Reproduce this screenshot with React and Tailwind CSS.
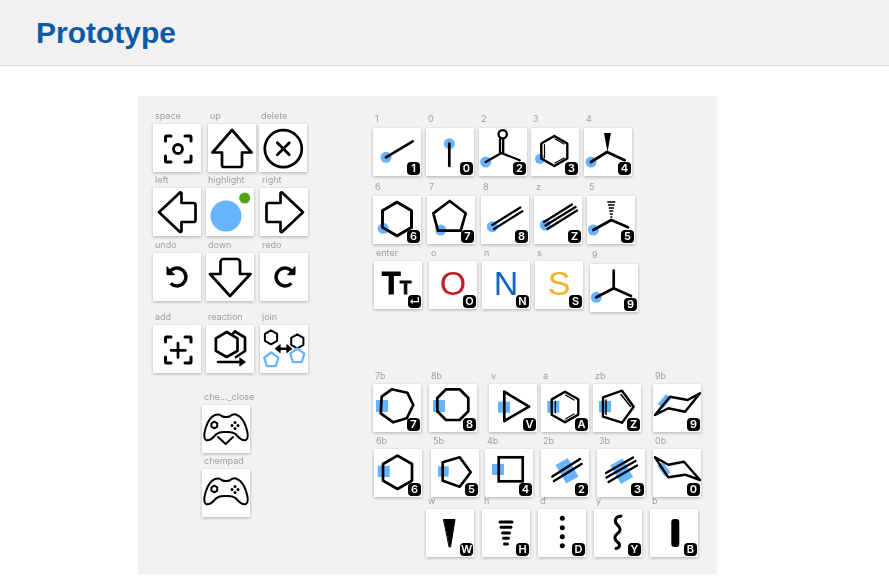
const BLUE = '#66b3ff';

function hexPts(cx, cy, r) {
  const pts = [];
  for (let i = 0; i < 6; i++) {
    const a = (Math.PI / 3) * i - Math.PI / 2;
    pts.push(`${(cx + r * Math.cos(a)).toFixed(1)},${(cy + r * Math.sin(a)).toFixed(1)}`);
  }
  return pts.join(' ');
}

function pentPts(cx, cy, r) {
  const pts = [];
  for (let i = 0; i < 5; i++) {
    const a = ((Math.PI * 2) / 5) * i - Math.PI / 2;
    pts.push(`${(cx + r * Math.cos(a)).toFixed(1)},${(cy + r * Math.sin(a)).toFixed(1)}`);
  }
  return pts.join(' ');
}

const Svg = ({ children }) => (
  <svg viewBox="0 0 48 48" className="w-full h-full" fill="none" stroke="#000" strokeWidth="2.7" strokeLinejoin="round" strokeLinecap="round">
    {children}
  </svg>
);

const Dot = ({ x, y, r = 5.5 }) => <circle cx={x} cy={y} r={r} fill={BLUE} stroke="none" />;
const Patch = ({ x, y, w = 12, h = 12 }) => <rect x={x} y={y} width={w} height={h} fill={BLUE} stroke="none" />;

const Brackets = () => (
  <path d="M12.5 17V13a1 1 0 0 1 1-1H18M32 12h5a1 1 0 0 1 1 1v4M38 32v5a1 1 0 0 1-1 1h-5M18 38h-4.500a1 1 0 0 1-1-1v-5" strokeWidth="3" />
);

const Pad = ({ chevron }) => (
  <>
    <path d="M13 10C15.500 9 18 9.500 20 11.200 22.500 12.200 25.500 12.200 28 11.200 30 9.500 33 9 35 10 39 11.500 42 16 44 22 46 28 47 33 44 35 41 36.500 37 33 33.500 29 31.500 27.500 29 27 26 27H22C19 27 16.500 27.500 14.500 29 11 33 7 36.500 4 35 1 33 2 28 4 22 6 16 9 11.500 13 10Z" strokeWidth="2" />
    <polygon points={hexPts(12.300, 20, 3.300)} strokeWidth="2" />
    <g fill="#000" stroke="none">
      <circle cx="33" cy="17.500" r="1.500" />
      <circle cx="33" cy="23.500" r="1.500" />
      <circle cx="30" cy="20.500" r="1.500" />
      <circle cx="36" cy="20.500" r="1.500" />
    </g>
    {chevron && <path d="M16 32L23.700 39 31 32" strokeWidth="2" />}
  </>
);

const icons = {
  space: (
    <Svg>
      <Brackets />
      <circle cx="25" cy="25" r="4.500" strokeWidth="2.800" />
    </Svg>
  ),
  up: <Svg><path d="M24 6L4.500 28.500H14V41a2 2 0 0 0 2 2H32a2 2 0 0 0 2-2V28.500H43.500Z" /></Svg>,
  delete: (
    <Svg>
      <circle cx="24.300" cy="24.700" r="18.500" />
      <path d="M18.300 18.700l12 12M30.300 18.700l-12 12" />
    </Svg>
  ),
  left: <Svg><path d="M6 24.300L27 4.500a1 1 0 0 1 1.500 1V15H40.500a2 2 0 0 1 2 2V32a2 2 0 0 1-2 2H28.500V43a1 1 0 0 1-1.500 1Z" /></Svg>,
  highlight: (
    <Svg>
      <circle cx="20" cy="28" r="15.500" fill={BLUE} stroke="none" />
      <circle cx="38.700" cy="10" r="5.500" fill="#52a518" stroke="none" />
    </Svg>
  ),
  right: <Svg><path d="M43 24.300L22 4.500a1 1 0 0 0-1.500 1V15H8.500a2 2 0 0 0-2 2V32a2 2 0 0 0 2 2H20.500V43a1 1 0 0 0 1.500 1Z" /></Svg>,
  undo: (
    <Svg>
      <path d="M16.600 18.800A9 9 0 1 1 17.600 30.400" strokeWidth="3.400" strokeLinecap="butt" />
      <polygon points="14,14 14,21.700 21,21.700" fill="#000" strokeWidth="1" />
    </Svg>
  ),
  down: <Svg><path d="M24 43L4 21H14.500V9a3 3 0 0 1 3-3H31a3 3 0 0 1 3 3V21H44.500Z" /></Svg>,
  redo: (
    <Svg>
      <g transform="translate(49 0) scale(-1 1)">
        <path d="M16.600 18.800A9 9 0 1 1 17.600 30.400" strokeWidth="3.400" strokeLinecap="butt" />
        <polygon points="14,14 14,21.700 21,21.700" fill="#000" strokeWidth="1" />
      </g>
    </Svg>
  ),
  add: (
    <Svg>
      <Brackets />
      <path d="M25 18v14.500M18 25.300h14.500" />
    </Svg>
  ),
  reaction: (
    <Svg>
      <path d="M27 8.500l2-2 10 6V26l-9 6" />
      <polygon points={hexPts(20.700, 19.500, 12.500)} fill="#fff" />
      <path d="M12 37H36" strokeWidth="2.700" />
      <polygon points="34,33 39.500,37 34,41" fill="#000" strokeWidth="0.800" />
    </Svg>
  ),
  join: (
    <Svg>
      <polygon points={hexPts(11, 12.300, 7)} strokeWidth="2" />
      <polygon points={hexPts(37.300, 16.300, 7)} strokeWidth="2" />
      <polygon points={pentPts(11.300, 35, 7.500)} stroke={BLUE} strokeWidth="2.200" />
      <polygon points={pentPts(37.300, 31, 7.500)} stroke={BLUE} strokeWidth="2.200" />
      <path d="M18 23.700H29" strokeWidth="2.600" />
      <polygon points="20,19.800 15,23.700 20,27.500" fill="#000" strokeWidth="0.800" />
      <polygon points="27,19.800 32,23.700 27,27.500" fill="#000" strokeWidth="0.800" />
    </Svg>
  ),
  padClose: <Svg><Pad chevron /></Svg>,
  pad: <Svg><Pad /></Svg>,

  single: <Svg><Dot x={13} y={29.300} /><path d="M13 29.300L39.700 13.300" /></Svg>,
  vert: <Svg><Dot x={23.300} y={15.700} /><path d="M23.300 15.700V38" /></Svg>,
  carbonyl: (
    <Svg>
      <Dot x={6.700} y={34} />
      <path d="M6.700 34L22.300 25 40.700 32.300M21 25V11.500M24.200 25V11.500" strokeWidth="2.300" />
      <circle cx="23.700" cy="6.300" r="4.200" strokeWidth="2.300" />
    </Svg>
  ),
  benzene: (
    <Svg>
      <Dot x={9} y={31} r={5} />
      <polygon points={hexPts(23.300, 23, 15)} strokeWidth="2.400" />
      <path d="M13.500 16.500V29.500M24 10.800L33 16M33 30L24 35" strokeWidth="1.200" />
    </Svg>
  ),
  wedgeUp: (
    <Svg>
      <Dot x={7} y={34} />
      <path d="M7 34L23 24 40.700 32.300" />
      <polygon points="20,5 27,5 23.500,24" fill="#000" stroke="none" />
    </Svg>
  ),
  hexDot: (
    <Svg>
      <polygon points={hexPts(24, 23, 16.800)} />
      <Dot x={10.300} y={32.300} />
      <polygon points={hexPts(24, 23, 16.800)} />
    </Svg>
  ),
  pentDot: (
    <Svg>
      <Dot x={13.700} y={34} />
      <polygon points="22.700,5 38.700,17.300 33.700,34.700 11,34.700 6.300,17.300" />
    </Svg>
  ),
  double: (
    <Svg>
      <Dot x={11.300} y={30.700} />
      <path d="M11.300 29L39.300 11.500M13 33L41.300 15.300" strokeWidth="2.300" />
    </Svg>
  ),
  triple: (
    <Svg>
      <Dot x={11.300} y={29} />
      <path d="M10 26L38 8.500M11.500 29.500L41.500 11M13.500 33L43 14.500" strokeWidth="2.300" />
    </Svg>
  ),
  hashUp: (
    <Svg>
      <Dot x={6.300} y={34} />
      <path d="M6.300 34L24.300 24 41 31.300" />
      <g stroke="#000" strokeWidth="1.300" strokeLinecap="butt">
        <path d="M20.300 6H28.300M21 9H27.500M21.700 12H27M22.300 15H26.300M22.800 18H25.800M23.300 21H25.300" />
      </g>
    </Svg>
  ),
  tripod: (
    <Svg>
      <Dot x={6.300} y={33.300} />
      <path d="M6.300 33.300L23.700 24.300 41 32M23.700 24.300V6.700" />
    </Svg>
  ),

  hept: (
    <Svg>
      <Patch x={3} y={16} h={12} />
      <polygon points="18.700,5.300 34.300,8.700 40.300,21 33.700,34.300 20.300,38.300 7.700,29.300 8.700,12.700" />
    </Svg>
  ),
  oct: (
    <Svg>
      <Patch x={4} y={16} />
      <polygon points="17,5.300 30.600,5.300 39.300,14 39.300,27.300 30.600,36 17,36 8.300,27.300 8.300,14" />
    </Svg>
  ),
  tri: (
    <Svg>
      <Patch x={9} y={17.700} h={11} />
      <polygon points="15.300,7.700 40,22.700 15.300,37" />
    </Svg>
  ),
  aromatic: (
    <Svg>
      <Patch x={6.300} y={17} h={11.700} />
      <polygon points={hexPts(24, 23, 15.300)} strokeWidth="2.400" />
      <path d="M14.300 17V29M24.500 11L33 16M33 30L24.500 35" strokeWidth="1.200" />
    </Svg>
  ),
  cyclopentene: (
    <Svg>
      <Patch x={6} y={17} h={11.300} />
      <polygon points="10,13.300 29,6.700 40.700,22.700 29,38.700 10,32.700" strokeWidth="2.400" />
      <path d="M13 16V30.500M28 10.500L37.500 22.500" strokeWidth="1.500" />
    </Svg>
  ),
  chairUp: (
    <Svg>
      <rect x="5" y="14" width="13" height="7" fill={BLUE} stroke="none" transform="rotate(-50 11.300 17.300)" />
      <polygon points="2,31 17,12.700 34.700,16 47,9.300 32,27.700 15.300,24.300" strokeWidth="2.400" />
    </Svg>
  ),
  hexPatch: (
    <Svg>
      <Patch x={3.700} y={16.700} h={11.300} />
      <polygon points={hexPts(23.500, 23.300, 16.700)} />
    </Svg>
  ),
  pentRight: (
    <Svg>
      <Patch x={7} y={17.300} w={10.700} h={10.400} />
      <polygon points="11.700,13.300 28.700,8.300 39.700,23.300 28.700,37.700 11.700,31.700" />
    </Svg>
  ),
  square: (
    <Svg>
      <Patch x={7} y={15} h={11} />
      <rect x="13.700" y="8.300" width="24" height="24" strokeLinejoin="miter" />
    </Svg>
  ),
  patchDouble: (
    <Svg>
      <rect x="19" y="11" width="14" height="21.500" fill={BLUE} stroke="none" transform="rotate(-30 26 21.700)" />
      <path d="M11.300 27.500L39 10M13 32L40.500 15" strokeWidth="2.500" />
    </Svg>
  ),
  patchTriple: (
    <Svg>
      <rect x="17.700" y="11.500" width="14" height="21.500" fill={BLUE} stroke="none" transform="rotate(-30 24.700 22.300)" />
      <path d="M9 24L36 8.500M9.500 28.500L38.500 12M11.500 33L40 16.500" strokeWidth="2.300" />
    </Svg>
  ),
  chairDown: (
    <Svg>
      <rect x="4.500" y="16.500" width="13" height="7" fill={BLUE} stroke="none" transform="rotate(55 10.700 20)" />
      <polygon points="2,8.300 15.300,28.300 32,25.700 47,31 31,12.700 15.300,15.700" strokeWidth="2.400" />
    </Svg>
  ),

  wedge: <Svg><polygon points="17.800,10.500 29,10.500 24.500,38 23.500,38" fill="#000" strokeWidth="1" /></Svg>,
  hash: (
    <Svg>
      <path d="M18 13H30M19 18.300H29M20.500 24H27.500M21.500 29.300H26.500M22.500 35H25.500" strokeWidth="3" />
    </Svg>
  ),
  dots: (
    <Svg>
      <g fill="#000" stroke="none">
        <circle cx="24.300" cy="9.300" r="2.500" />
        <circle cx="24.300" cy="18.700" r="2.500" />
        <circle cx="24.300" cy="27.700" r="2.500" />
        <circle cx="24.300" cy="36.700" r="2.500" />
      </g>
    </Svg>
  ),
  wavy: <Svg><path d="M27 7C21 7.500 20 12.500 23 15.500 27 19 27 22 23.500 24.500 20 27 20 30.500 23.500 33 26.500 35.500 26 39 22 39.500" strokeWidth="3" /></Svg>,
  bold: <Svg><rect x="21.300" y="10" width="8" height="28" rx="3" fill="#000" stroke="none" /></Svg>,
};

const Letter = ({ className, children }) => (
  <div className={`w-full h-full flex items-center justify-center pb-[3px] font-['Liberation_Sans',sans-serif] text-[34px] ${className}`}>
    {children}
  </div>
);

function Key({ label, icon, children, badge, className = '', tall }) {
  return (
    <div className={`w-[48px] shrink-0 ${className}`}>
      <div className={`h-[12px] leading-[12px] pl-[2px] text-[9px] text-[#a0a0a0] whitespace-nowrap font-['Inter',sans-serif] ${tall ? 'mb-[3px]' : 'mb-[2px]'}`}>
        {label}
      </div>
      <div className="relative w-[48px] h-[48px] bg-white shadow-[0_1px_3px_rgba(0,0,0,0.28)]">
        {icon ? icons[icon] : children}
        {badge && (
          <div className="absolute right-[1px] bottom-[1px] w-[13px] h-[13px] rounded-[4px] bg-black text-white text-[11px] leading-[13px] font-semibold text-center font-['Inter','DejaVu_Sans',sans-serif]">
            {badge}
          </div>
        )}
      </div>
    </div>
  );
}

export default function App() {
  return (
    <div className="min-h-[583px] bg-white">
      <header className="h-[66px] bg-[#f1f1f1] border-b border-[#d8d8d8] flex items-center pl-[36px]">
        <h1 className="text-[30px] font-bold text-[#0b5aa5] font-['Liberation_Sans',Arial,sans-serif] leading-none">
          Prototype
        </h1>
      </header>

      <main className="mt-[30px] ml-[138px] w-[579px] h-[478px] bg-[#f2f2f2] flex overflow-hidden blur-[0.35px]">
        {/* left column: navigation keys */}
        <div className="w-[235px] shrink-0 pl-[15px] pt-[14px]">
          <div className="flex">
            <Key label="space" icon="space" />
            <Key label="up" icon="up" className="ml-[7px]" />
            <Key label="delete" icon="delete" className="ml-[3px]" />
          </div>
          <div className="flex mt-[2px]">
            <Key label="left" icon="left" />
            <Key label="highlight" icon="highlight" className="ml-[5px]" />
            <Key label="right" icon="right" className="ml-[6px]" />
          </div>
          <div className="flex mt-[3px]">
            <Key label="undo" icon="undo" />
            <Key label="down" icon="down" className="ml-[5px]" />
            <Key label="redo" icon="redo" className="ml-[6px]" />
          </div>
          <div className="flex mt-[10px]">
            <Key label="add" icon="add" />
            <Key label="reaction" icon="reaction" className="ml-[5px]" />
            <Key label="join" icon="join" className="ml-[6px]" />
          </div>
          <Key label="che..._close" icon="padClose" className="ml-[49px] mt-[18px]" />
          <Key label="chempad" icon="pad" className="ml-[49px] mt-[2px]" />
        </div>

        {/* right column: chemistry keys */}
        <div className="flex-1 pt-[17px]">
          <div className="flex">
            <Key tall label="1" icon="single" badge="1" />
            <Key tall label="0" icon="vert" badge="0" className="ml-[5px]" />
            <Key tall label="2" icon="carbonyl" badge="2" className="ml-[5px]" />
            <Key tall label="3" icon="benzene" badge="3" className="ml-[4px]" />
            <Key tall label="4" icon="wedgeUp" badge="4" className="ml-[5px]" />
          </div>
          <div className="flex mt-[5px]">
            <Key tall label="6" icon="hexDot" badge="6" />
            <Key tall label="7" icon="pentDot" badge="7" className="ml-[6px]" />
            <Key tall label="8" icon="double" badge="8" className="ml-[6px]" />
            <Key tall label="z" icon="triple" badge="Z" className="ml-[5px]" />
            <Key tall label="5" icon="hashUp" badge="5" className="ml-[5px]" />
          </div>
          <div className="flex items-start mt-[3px] ml-[1px]">
            <Key label="enter" badge="↵">
              <div className="w-full h-full flex items-baseline justify-center pt-[5px] pr-[3px] font-bold font-['Liberation_Sans',sans-serif] text-black leading-[36px] [-webkit-text-stroke:0.8px_black]">
                <span className="text-[31px]">T</span>
                <span className="text-[19px] -ml-[1px]">T</span>
              </div>
            </Key>
            <Key label="o" badge="O" className="ml-[7px]">
              <Letter className="text-[#c0202f]">O</Letter>
            </Key>
            <Key label="n" badge="N" className="ml-[5px]">
              <Letter className="text-[#1565c0]">N</Letter>
            </Key>
            <Key label="s" badge="S" className="ml-[5px]">
              <Letter className="text-[#f0b323]">S</Letter>
            </Key>
            <Key tall label="9" icon="tripod" badge="9" className="ml-[7px] mt-[2px]" />
          </div>

          <div className="flex mt-[58px]">
            <Key label="7b" icon="hept" badge="7" />
            <Key label="8b" icon="oct" badge="8" className="ml-[8px]" />
            <Key label="v" icon="tri" badge="V" className="ml-[12px]" />
            <Key label="a" icon="aromatic" badge="A" className="ml-[4px]" />
            <Key label="zb" icon="cyclopentene" badge="Z" className="ml-[4px]" />
            <Key label="9b" icon="chairUp" badge="9" className="ml-[12px]" />
          </div>
          <div className="flex mt-[3px] ml-[1px]">
            <Key label="6b" icon="hexPatch" badge="6" />
            <Key label="5b" icon="pentRight" badge="5" className="ml-[9px]" />
            <Key label="4b" icon="square" badge="4" className="ml-[6px]" />
            <Key label="2b" icon="patchDouble" badge="2" className="ml-[8px]" />
            <Key label="3b" icon="patchTriple" badge="3" className="ml-[8px]" />
            <Key label="0b" icon="chairDown" badge="0" className="ml-[8px]" />
          </div>
          <div className="flex -mt-[2px] ml-[53px]">
            <Key label="w" icon="wedge" badge="W" />
            <Key label="h" icon="hash" badge="H" className="ml-[8px]" />
            <Key label="d" icon="dots" badge="D" className="ml-[8px]" />
            <Key label="y" icon="wavy" badge="Y" className="ml-[8px]" />
            <Key label="b" icon="bold" badge="B" className="ml-[8px]" />
          </div>
        </div>
      </main>
    </div>
  );
}
